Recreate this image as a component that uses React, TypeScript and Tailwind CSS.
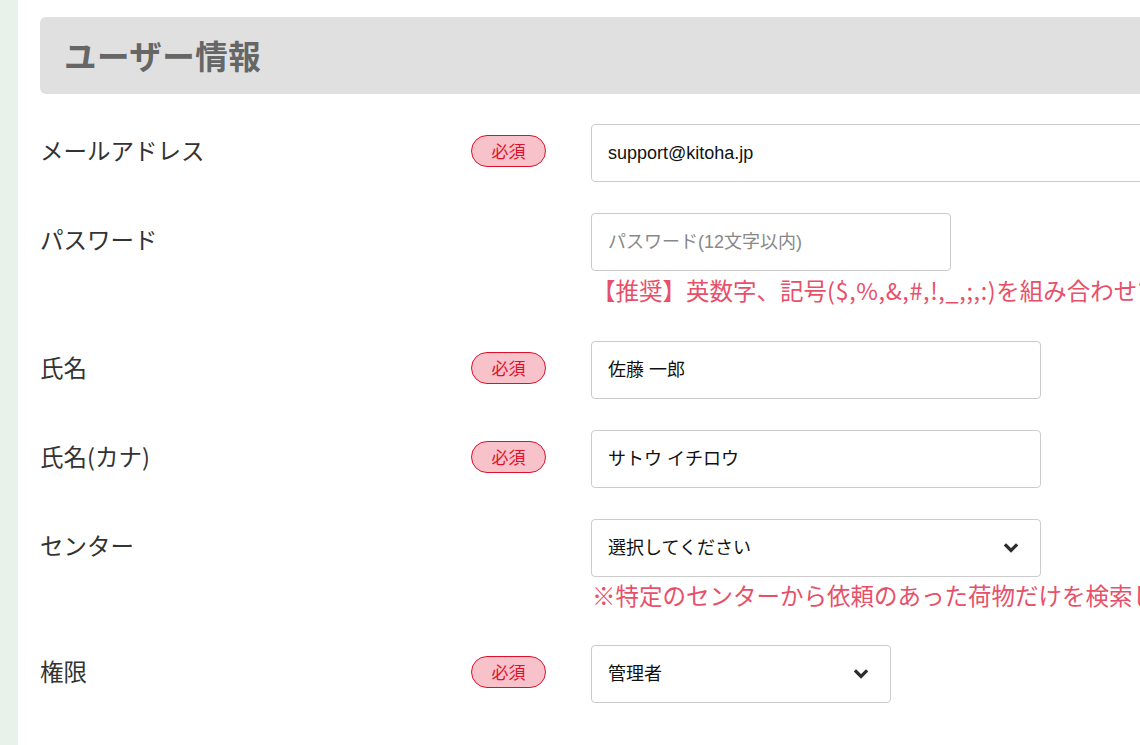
import React from 'react';

const FONT = '"Noto Sans CJK JP", "Noto Sans", sans-serif';
const INPUT_FONT = '"Liberation Sans", "Noto Sans CJK JP", sans-serif';

function Required() {
  return (
    <span className="inline-flex items-center justify-center w-[75px] h-[32px] rounded-full border border-[#e0102a] bg-[#f8c2ca] text-[#e0102a] text-[17px] leading-none">
      必須
    </span>
  );
}

function Chevron() {
  return (
    <svg width="14" height="10" viewBox="0 0 14 10" className="shrink-0">
      <polyline points="2,2.5 7,7.5 12,2.5" fill="none" stroke="#2d2d2d" strokeWidth="3.2" strokeLinecap="square" />
    </svg>
  );
}

type Row = {
  label: string;
  required?: boolean;
  value?: string;
  placeholder?: string;
  width: string;
  select?: boolean;
  note?: React.ReactNode;
  noteClass?: string;
};

const ROWS: Row[] = [
  { label: 'メールアドレス', required: true, value: 'support@kitoha.jp', width: 'w-[600px]' },
  {
    label: 'パスワード',
    placeholder: 'パスワード(12文字以内)',
    width: 'w-[360px]',
    noteClass: 'leading-[39px]',
    note: (
      <>
        【推奨】英数字、記号<span className="tracking-[0.6px]">($,%,&amp;,#,!,_,;,:)</span>を組み合わせてください
      </>
    ),
  },
  { label: '氏名', required: true, value: '佐藤 一郎', width: 'w-[450px]' },
  { label: '氏名(カナ)', required: true, value: 'サトウ イチロウ', width: 'w-[450px]' },
  {
    label: 'センター',
    value: '選択してください',
    width: 'w-[450px]',
    select: true,
    noteClass: 'leading-[37px]',
    note: '※特定のセンターから依頼のあった荷物だけを検索したい場合に選択してください',
  },
  { label: '権限', required: true, value: '管理者', width: 'w-[300px]', select: true },
];

export default function App() {
  return (
    <div className="flex min-h-[745px] w-[1140px] overflow-hidden bg-white" style={{ fontFamily: FONT }}>
      {/* side strip */}
      <div className="w-[18px] shrink-0 bg-[#e9f1eb]" />

      <main className="flex-1 pl-[22px] pt-[17px] min-w-0">
        <div className="h-[77px] w-[1120px] rounded-[6px] bg-[#e0e0e0] flex items-center pl-[24px]">
          <h1 className="text-[32.5px] font-bold text-[#666666] tracking-[0.5px]">ユーザー情報</h1>
        </div>

        <div className="pt-[30px] flex flex-col gap-[31px]">
          {ROWS.map((row) => (
            <div key={row.label} className="flex items-start">
              <div className="w-[551px] shrink-0 h-[58px] flex items-center pb-[5px]">
                <span className="w-[431px] text-[23.5px] text-[#333333] whitespace-nowrap">{row.label}</span>
                {row.required && <Required />}
              </div>
              <div className="flex flex-col min-w-0">
                <div
                  className={`${row.width} h-[58px] shrink-0 rounded-[4px] border border-[#cccccc] bg-white flex items-center justify-between pl-[16px] pr-[22px] text-[18px] ${
                    row.placeholder ? 'text-[#888888]' : 'text-[#111111]'
                  }`}
                  style={{ fontFamily: INPUT_FONT }}
                >
                  <span className="whitespace-nowrap">{row.value ?? row.placeholder}</span>
                  {row.select && <Chevron />}
                </div>
                {row.note && (
                  <p className={`${row.noteClass} text-[23.5px] text-[#e8506a] whitespace-nowrap pl-[1px]`}>{row.note}</p>
                )}
              </div>
            </div>
          ))}
        </div>
      </main>
    </div>
  );
}
